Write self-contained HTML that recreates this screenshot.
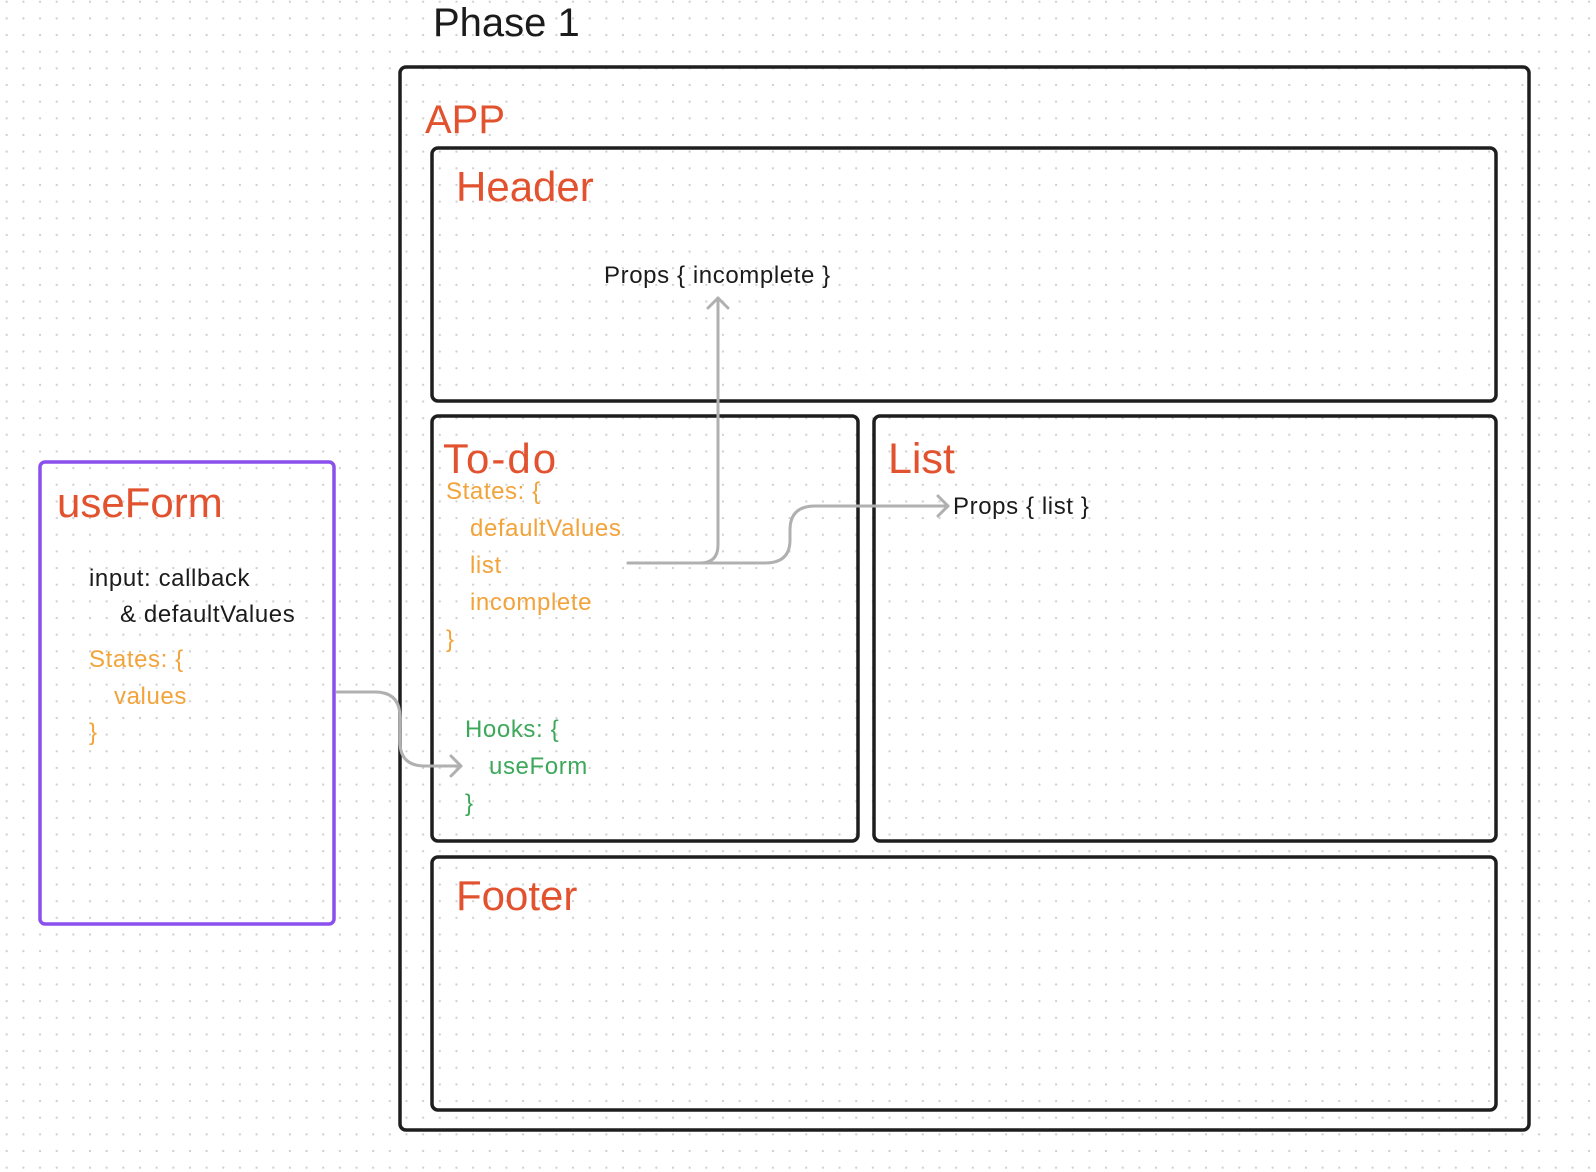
<!DOCTYPE html>
<html><head><meta charset="utf-8"><style>
html,body{margin:0;padding:0}
body{width:1596px;height:1172px;overflow:hidden;position:relative;background-color:#fff;
background-image:radial-gradient(circle,#cfcfcf 1px,transparent 1.3px);
background-size:16.67px 16.67px;background-position:-1.6px -6.6px;
font-family:"Liberation Sans",Arial,sans-serif}
.t{position:absolute;white-space:nowrap;line-height:1}
.r{color:#E2522F;font-size:42px}
.o{color:#F2A33A;font-size:24px;letter-spacing:0.6px}
.g{color:#3DA85A;font-size:24px;letter-spacing:0.6px}
.k{color:#1b1b1b;font-size:24px;letter-spacing:0.6px}
svg{position:absolute;left:0;top:0}
</style></head><body>
<svg width="1596" height="1172" viewBox="0 0 1596 1172" fill="none">
<g stroke="#1e1e1e" stroke-width="3.5">
<rect x="400" y="67" width="1129" height="1063" rx="6"/>
<rect x="432" y="148" width="1064" height="253" rx="6"/>
<rect x="432" y="416" width="426" height="425" rx="6"/>
<rect x="874" y="416" width="622" height="425" rx="6"/>
<rect x="432" y="857" width="1064" height="253" rx="6"/>
</g>
<rect x="40" y="462" width="294" height="462" rx="5" stroke="#8B4FEE" stroke-width="3.5"/>
<g stroke="#b0b0b0" stroke-width="3" stroke-linecap="round" stroke-linejoin="round">
<path d="M628 563 H700 Q718 563 718 545 V298"/>
<path d="M708 308 L718 298 L728 308"/>
<path d="M628 563 H765 Q790 563 790 540 V530 Q790 506 815 506 H948"/>
<path d="M938 496 L948 506 L938 516"/>
<path d="M337 692 H375 Q400 692 400 717 V742 Q400 766 425 766 H461"/>
<path d="M451 756 L461 766 L451 776"/>
</g>
</svg>
<div class="t" style="left:433px;top:3px;font-size:40px;color:#1b1b1b">Phase 1</div>
<div class="t r" style="left:425px;top:100px;font-size:40px">APP</div>
<div class="t r" style="left:456px;top:166px">Header</div>
<div class="t k" style="left:604px;top:264px">Props { incomplete }</div>
<div class="t r" style="left:443px;top:438px;letter-spacing:2px">To-do</div>
<div class="t o" style="left:446px;top:480px">States: {</div>
<div class="t o" style="left:470px;top:517px">defaultValues</div>
<div class="t o" style="left:470px;top:554px">list</div>
<div class="t o" style="left:470px;top:591px">incomplete</div>
<div class="t o" style="left:446px;top:628px">}</div>
<div class="t g" style="left:465px;top:718px">Hooks: {</div>
<div class="t g" style="left:489px;top:755px">useForm</div>
<div class="t g" style="left:465px;top:792px">}</div>
<div class="t r" style="left:888px;top:438px;font-size:43px">List</div>
<div class="t k" style="left:953px;top:495px">Props { list }</div>
<div class="t r" style="left:456px;top:875px">Footer</div>
<div class="t r" style="left:57px;top:482px">useForm</div>
<div class="t k" style="left:89px;top:567px">input: callback</div>
<div class="t k" style="left:120px;top:603px">&amp; defaultValues</div>
<div class="t o" style="left:89px;top:648px">States: {</div>
<div class="t o" style="left:114px;top:685px">values</div>
<div class="t o" style="left:89px;top:721px">}</div>
</body></html>
